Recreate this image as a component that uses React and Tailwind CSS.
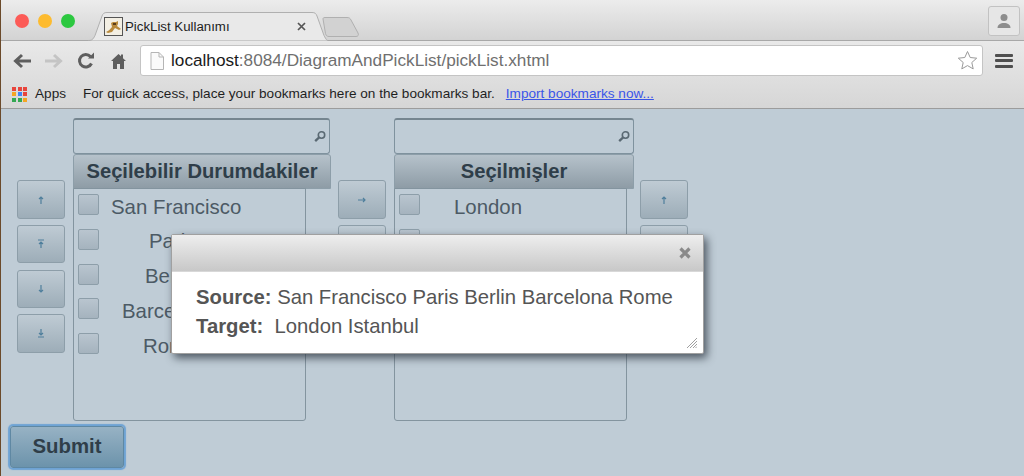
import React from "react";

const SmallIcon = ({ kind }) => {
  const paths = {
    up: "M5 9V2M3 4l2-2 2 2",
    top: "M2 1h6M5 9V3M3 5l2-2 2 2",
    down: "M5 1v7M3 6l2 2 2-2",
    bottom: "M2 9h6M5 1v6M3 5l2 2 2-2",
    right: "M1 5h7M6 3l2 2-2 2",
  };
  return (
    <svg width="10" height="10" viewBox="0 0 10 10" fill="none" stroke="#4f7f9c" strokeWidth="1.2">
      <path d={paths[kind]} />
    </svg>
  );
};

const ToolBtn = ({ kind, className = "" }) => (
  <div className={`flex items-center justify-center w-[48px] rounded-[3px] border border-[#8d9ea9] bg-gradient-to-b from-[#bfcbd4] to-[#9dadb8] ${className}`}>
    <SmallIcon kind={kind} />
  </div>
);

const ButtonColumn = ({ kinds }) => (
  <div className="flex flex-col gap-[6.33px] pt-[62px]">
    {kinds.map((k, i) => (
      <ToolBtn key={i} kind={k} className={i === 0 || i === 3 ? "h-[39px]" : "h-[38px]"} />
    ))}
  </div>
);

const Search = () => (
  <svg width="14" height="14" viewBox="0 0 14 14" fill="none" stroke="#5a6973">
    <circle cx="8.5" cy="5" r="3.2" strokeWidth="1.6" />
    <path d="M6 7.5L2.2 11.2" strokeWidth="2.4" />
  </svg>
);

const PickList = ({ title, searchClass, headClass, items }) => (
  <div className={`flex flex-col ${headClass}`}>
    <div className={`h-[36px] flex items-center justify-end pr-[2px] rounded-[3px] border border-[#7f929e] border-t-2 border-t-[#75858f] bg-[#bfccd6] ${searchClass}`}>
      <Search />
    </div>
    <div className="h-[35px] flex items-center justify-center rounded-t-[3px] border border-[#8d9ea9] bg-gradient-to-b from-[#b6c2cb] to-[#8e9ca6] text-[20.2px] font-bold text-[#2f3e49]">
      {title}
    </div>
    <div className="w-[233px] h-[233px] -mt-px rounded-b-[3px] border border-[#83949f] pl-[4px] pt-[5px] flex flex-col gap-[13.75px]">
      {items.map(([t, pad], i) => (
        <div key={i} className="flex h-[21px] items-center">
          <div className="w-[21px] h-[21px] shrink-0 rounded-[2px] border border-[#8d9ea9] bg-gradient-to-b from-[#b9c5cf] to-[#a5b3be]" />
          <div className={`mt-[5px] text-[20.4px] text-[#4c5a65] whitespace-nowrap ${pad}`}>{t}</div>
        </div>
      ))}
    </div>
  </div>
);

const Chrome = () => (
  <div className="h-[109px] flex flex-col">
    <div className="relative h-[41px] border-b border-[#a8a8a8] bg-gradient-to-b from-[#ececec] to-[#d3d3d3] flex items-start">
      <div className="flex gap-[9px] pl-[14px] pt-[14px]">
        <div className="w-[14px] h-[14px] rounded-full bg-[#fc5b57]" />
        <div className="w-[14px] h-[14px] rounded-full bg-[#fdbb2f]" />
        <div className="w-[14px] h-[14px] rounded-full bg-[#2cc840]" />
      </div>
      <div className="relative ml-[13px] mt-[12px] w-[240px] h-[29px]">
        <svg className="absolute inset-0" width="240" height="29" viewBox="0 0 240 29">
          <path d="M0 28.5c4 0 5-1 7-5L14 4c1-2.500 2-3.500 5-3.500h205c3 0 4 1 5 3.500l7 19.500c2 4 3 5 4 5" fill="#e9e9e9" stroke="#b0b0b0" />
        </svg>
        <svg className="absolute left-[16px] top-[5px]" width="19" height="19" viewBox="0 0 19 19">
          <rect x="0.500" y="0.500" width="18" height="18" fill="#f3efe4" stroke="#555" />
          <path d="M2 15c3-1 4-3 6-5l-1-4 2-1 3 0 2-1 0 3-1 2 4 3-2 1-4-2-3 4-4 1z" fill="#b98a3c" />
          <path d="M9 6h3v2H9z" fill="#5a3d1a" />
        </svg>
        <span className="absolute left-[37px] top-[5px] text-[13.25px] leading-[19px] text-[#1d1d1d] whitespace-nowrap">PickList Kullanımı</span>
        <svg className="absolute left-[209px] top-[10px]" width="9" height="9" viewBox="0 0 9 9" stroke="#555" strokeWidth="1.700">
          <path d="M1 1l7 7M8 1l-7 7" />
        </svg>
      </div>
      <svg className="ml-[-6px] mt-[17px]" width="37" height="20" viewBox="0 0 37 20">
        <path d="M1 2c0-1 .5-1.500 2-1.500h22c2 0 3 .5 4 2.500l7 13c1 2 0 3.500-2 3.500H7c-2 0-3-1-3.500-3z" fill="#d2d2d2" stroke="#b0b0b0" />
      </svg>
      <div className="ml-auto mr-[4px] mt-[6px] w-[32px] h-[30px] rounded-[3px] border border-[#c2c2c2] bg-[#e6e6e6] flex items-center justify-center">
        <svg width="16" height="16" viewBox="0 0 16 16" fill="#8d8d8d">
          <circle cx="8" cy="4.500" r="3.500" />
          <path d="M1.500 15c0-3.500 3-5 6.500-5s6.500 1.500 6.500 5z" />
        </svg>
      </div>
    </div>
    <div className="flex-1 border-b border-[#9c9c9c] bg-gradient-to-b from-[#e9e9e9] to-[#d6d6d6] flex flex-col">
      <div className="h-[39px] flex items-center">
        <div className="flex items-center pl-[11px] w-[139px]">
          <svg width="20" height="16" viewBox="0 0 20 16" fill="none" stroke="#5e5e5e" strokeWidth="3">
            <path d="M19 8H4M10 2L3.500 8l6.500 6" />
          </svg>
          <svg className="ml-[12px]" width="20" height="16" viewBox="0 0 20 16" fill="none" stroke="#c4c4c4" strokeWidth="3">
            <path d="M1 8h15M10 2l6.500 6L10 14" />
          </svg>
          <svg className="ml-[13px]" width="18" height="18" viewBox="0 0 18 18" fill="none" stroke="#5e5e5e" strokeWidth="3">
            <path d="M14.500 11.500A6.300 6.300 0 1 1 13.500 4.500" />
            <path d="M11 6.500h6V.5z" fill="#5e5e5e" stroke="none" />
          </svg>
          <svg className="ml-[16px]" width="15" height="16" viewBox="0 0 15 16" fill="#5e5e5e">
            <path d="M7.500 1L0 8h2v8h4v-5h3v5h4V8h2l-3-2.800V1.500h-2v1.800z" />
          </svg>
        </div>
        <div className="w-[843px] h-[31px] rounded-[3px] border border-[#c4c4c4] bg-white flex items-center pl-[9px]">
          <svg width="14" height="18" viewBox="0 0 14 18" fill="#fafafa" stroke="#b5b5b5">
            <path d="M1 .5h8l4.500 4.500v12.500H1z" />
            <path d="M9 .5V5h4.500" fill="none" />
          </svg>
          <span className="ml-[7px] text-[17.2px] whitespace-nowrap text-[#6f6f6f]">
            <span className="text-[#1a1a1a]">localhost</span>:8084/DiagramAndPickList/pickList.xhtml
          </span>
          <svg className="ml-auto mr-[4px]" width="21" height="21" viewBox="0 0 21 21" fill="#fff" stroke="#9a9a9a">
            <path d="M10.500 1.500l2.700 6 6.500.7-4.900 4.300 1.400 6.400-5.700-3.300-5.700 3.300 1.400-6.400L1.300 8.200l6.500-.7z" />
          </svg>
        </div>
        <div className="ml-[12px] w-[18px] flex flex-col gap-[2.500px]">
          <div className="h-[3px] rounded-[1px] bg-[#4f4f4f]" />
          <div className="h-[3px] rounded-[1px] bg-[#4f4f4f]" />
          <div className="h-[3px] rounded-[1px] bg-[#4f4f4f]" />
        </div>
      </div>
      <div className="flex-1 flex items-center pl-[11px] text-[13.6px] text-[#1f1f1f] whitespace-nowrap">
        <div className="grid grid-cols-3 gap-[1.500px] w-[15px] h-[15px]">
          {["#e8453c", "#e8453c", "#e8453c", "#f5a623", "#4285f4", "#e8453c", "#34a853", "#34a853", "#f5a623"].map((c, i) => (
            <div key={i} className="w-[4px] h-[4px]" style={{ background: c }} />
          ))}
        </div>
        <span className="ml-[8px]">Apps</span>
        <span className="ml-[17px]">For quick access, place your bookmarks here on the bookmarks bar.</span>
        <span className="ml-[11px] text-[#3a55e8] underline">Import bookmarks now...</span>
      </div>
    </div>
  </div>
);

export default function App() {
  return (
    <div className="relative w-[1024px] h-[476px] overflow-hidden bg-[#bfccd6] font-['Liberation_Sans',sans-serif] border-l border-l-[#6b4a2a]">
      <Chrome />
      <div className="flex items-start pl-[16px] pt-[9px]">
        <ButtonColumn kinds={["up", "top", "down", "bottom"]} />
        <div className="ml-[8px]">
          <PickList
            title="Seçilebilir Durumdakiler"
            searchClass="w-[257px]"
            headClass="w-[258px]"
            items={[
              ["San Francisco", "pl-[12px]"],
              ["Paris", "pl-[50px]"],
              ["Berlin", "pl-[46px]"],
              ["Barcelona", "pl-[23px]"],
              ["Rome", "pl-[44px]"],
            ]}
          />
        </div>
        <div className="ml-[7px]">
          <ButtonColumn kinds={["right", "right"]} />
        </div>
        <div className="ml-[8px]">
          <PickList
            title="Seçilmişler"
            searchClass="w-[240px]"
            headClass="w-[240px]"
            items={[
              ["London", "pl-[34px]"],
              ["", ""],
            ]}
          />
        </div>
        <div className="ml-[6px]">
          <ButtonColumn kinds={["up", "top"]} />
        </div>
      </div>
      <div className="ml-[9px] mt-[5px] w-[114px] h-[42px] pb-[2px] rounded-[3px] border border-[#5f88a3] shadow-[0_0_1px_2px_#6ea3d4] flex items-center justify-center bg-gradient-to-b from-[#97b2c4] to-[#6c93ab] text-[20.4px] font-bold text-[#2f3e49]">
        Submit
      </div>

      <div className="absolute left-[170px] top-[234px] w-[533px] h-[120px] rounded-[2px] bg-white border border-[#a0a0a0] shadow-[3px_4px_8px_rgba(40,50,60,0.75)] flex flex-col">
        <div className="h-[37px] flex items-center justify-end pr-[12px] bg-gradient-to-b from-[#eeeeee] to-[#c8c8c8] border-b border-[#d8d8d8]">
          <svg width="12" height="12" viewBox="0 0 12 12" stroke="#8a8a8a" strokeWidth="3.200">
            <path d="M1.500 1.500l9 9M10.500 1.500l-9 9" />
          </svg>
        </div>
        <div className="relative flex-1 pl-[24px] pt-[11px] text-[20.3px] leading-[29px] text-[#555555] whitespace-pre">
          <div>
            <b>Source:</b> San Francisco Paris Berlin Barcelona Rome
          </div>
          <div>
            <b>Target:</b>{"  "}London Istanbul
          </div>
          <svg className="absolute right-[6px] bottom-[5px]" width="10" height="10" viewBox="0 0 10 10" stroke="#a0a0a0" strokeWidth="1">
            <path d="M10 0L0 10M10 3L3 10M10 6L6 10M10 8.500L8.500 10" />
          </svg>
        </div>
      </div>
    </div>
  );
}
